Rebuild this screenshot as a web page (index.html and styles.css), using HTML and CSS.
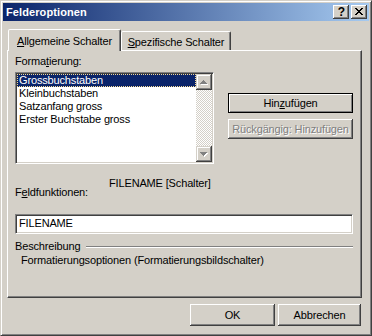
FILE: index.html
```html
<!DOCTYPE html>
<html lang="de">
<head>
<meta charset="utf-8">
<title>Felderoptionen</title>
<link rel="stylesheet" href="styles.css">
</head>
<body>
<div class="window">
  <div class="titlebar">
    <span class="title">Felderoptionen</span>
    <div class="caption-btns">
      <span class="cbtn help">?</span>
      <span class="cbtn close">
        <svg width="16" height="14" viewBox="0 0 16 14" shape-rendering="crispEdges">
          <g fill="#000">
            <rect x="4" y="3" width="2" height="1"/><rect x="10" y="3" width="2" height="1"/>
            <rect x="5" y="4" width="2" height="1"/><rect x="9" y="4" width="2" height="1"/>
            <rect x="6" y="5" width="4" height="1"/>
            <rect x="7" y="6" width="2" height="1"/>
            <rect x="6" y="7" width="4" height="1"/>
            <rect x="5" y="8" width="2" height="1"/><rect x="9" y="8" width="2" height="1"/>
            <rect x="4" y="9" width="2" height="1"/><rect x="10" y="9" width="2" height="1"/>
          </g>
        </svg>
      </span>
    </div>
  </div>

  <div class="tabs">
    <div class="tab active"><u>A</u>llgemeine Schalter</div>
    <div class="tab"><u>S</u>pezifische Schalter</div>
  </div>

  <div class="panel">
    <div class="label">Forma<u>t</u>ierung:</div>
    <div class="row-top">
      <div class="listbox">
        <div class="items">
          <div class="item selected">Grossbuchstaben</div>
          <div class="item">Kleinbuchstaben</div>
          <div class="item">Satzanfang gross</div>
          <div class="item">Erster Buchstabe gross</div>
        </div>
        <div class="scrollbar">
          <div class="sbtn">
            <svg width="16" height="16" viewBox="0 0 16 16" shape-rendering="crispEdges">
              <g fill="#fff" transform="translate(1,1)">
                <rect x="7" y="6" width="1" height="1"/><rect x="6" y="7" width="3" height="1"/>
                <rect x="5" y="8" width="5" height="1"/><rect x="4" y="9" width="7" height="1"/>
              </g>
              <g fill="#808080">
                <rect x="7" y="6" width="1" height="1"/><rect x="6" y="7" width="3" height="1"/>
                <rect x="5" y="8" width="5" height="1"/><rect x="4" y="9" width="7" height="1"/>
              </g>
            </svg>
          </div>
          <div class="track"></div>
          <div class="sbtn">
            <svg width="16" height="16" viewBox="0 0 16 16" shape-rendering="crispEdges">
              <g fill="#fff" transform="translate(1,1)">
                <rect x="4" y="6" width="7" height="1"/><rect x="5" y="7" width="5" height="1"/>
                <rect x="6" y="8" width="3" height="1"/><rect x="7" y="9" width="1" height="1"/>
              </g>
              <g fill="#808080">
                <rect x="4" y="6" width="7" height="1"/><rect x="5" y="7" width="5" height="1"/>
                <rect x="6" y="8" width="3" height="1"/><rect x="7" y="9" width="1" height="1"/>
              </g>
            </svg>
          </div>
        </div>
      </div>
      <div class="side">
        <div class="btn wide default">Hin<u>z</u>ufügen</div>
        <div class="btn wide disabled">Rückgängig: Hinzufügen</div>
      </div>
    </div>

    <div class="field-row">
      <div class="field-label">F<u>e</u>ldfunktionen:</div>
      <div class="field-syntax">FILENAME [Schalter]</div>
    </div>

    <div class="textbox">FILENAME</div>

    <div class="group-head">
      <span>Beschreibung</span>
      <div class="etch"></div>
    </div>
    <div class="desc">Formatierungsoptionen (Formatierungsbildschalter)</div>
  </div>

  <div class="footer">
    <div class="btn ok">OK</div>
    <div class="btn cancel">Abbrechen</div>
  </div>
</div>
</body>
</html>
```

FILE: styles.css
```css
* { box-sizing: border-box; }

html, body {
  margin: 0;
  padding: 0;
}

body {
  background: #d4d0c8;
  font-family: "Liberation Sans", Arial, sans-serif;
  font-size: 11px;
  line-height: 13px;
  letter-spacing: -0.15px;
  color: #000;
}

u { text-decoration: underline; text-underline-offset: 1px; }

.window {
  width: 372px;
  height: 336px;
  padding: 2px;
  background: #d4d0c8;
  border: 1px solid;
  border-color: #d4d0c8 #404040 #404040 #d4d0c8;
  box-shadow: inset 1px 1px #fff, inset -1px -1px #808080;
  display: flex;
  flex-direction: column;
}

/* Title bar */
.titlebar {
  height: 18px;
  flex: none;
  display: flex;
  align-items: center;
  padding: 0 2px 0 3px;
  background: linear-gradient(to right, #0a246a, #a6caf0);
}

.title {
  color: #fff;
  font-weight: bold;
  font-size: 11px;
  letter-spacing: 0.1px;
}

.caption-btns {
  margin-left: auto;
  display: flex;
  gap: 2px;
}

.cbtn {
  width: 16px;
  height: 14px;
  background: #d4d0c8;
  box-shadow: inset -1px -1px #404040, inset 1px 1px #fff, inset -2px -2px #808080;
  display: flex;
  align-items: center;
  justify-content: center;
}

.cbtn svg { display: block; }

.help {
  font-weight: bold;
  font-size: 12px;
  line-height: 14px;
  padding-left: 1px;
  letter-spacing: 0;
}

/* Tabs */
.tabs {
  display: flex;
  align-items: flex-end;
  height: 21px;
  margin: 8px 0 0 5px;
  flex: none;
}

.tab {
  background: #d4d0c8;
  border: 1px solid;
  border-bottom: none;
  border-color: #fff #404040 transparent #fff;
  box-shadow: inset -1px 0 #808080;
  border-radius: 2px 2px 0 0;
  text-align: center;
  white-space: nowrap;
}

.tab.active {
  width: 113px;
  height: 22px;
  margin-bottom: -1px;
  padding-top: 5px;
  position: relative;
  z-index: 1;
}

.tab:not(.active) {
  width: 110px;
  height: 19px;
  padding-top: 4px;
}

/* Panel */
.panel {
  margin-left: 4px;
  width: 355px;
  height: 248px;
  flex: none;
  border: 1px solid;
  border-color: #fff #404040 #404040 #fff;
  box-shadow: inset -1px -1px #808080;
  padding: 4px 8px 0 7px;
}

.row-top {
  display: flex;
  margin-top: 4px;
}

.listbox {
  width: 203px;
  height: 92px;
  background: #fff;
  border: 1px solid;
  border-color: #808080 #fff #fff #808080;
  box-shadow: inset 1px 1px #404040, inset -1px -1px #d4d0c8;
  padding: 1px;
  display: flex;
}

.items {
  flex: 1;
}

.item {
  height: 13px;
  padding-left: 2px;
  white-space: nowrap;
}

.item.selected {
  background: #0a246a;
  color: #fff;
  outline: 1px dotted #f5db95;
  outline-offset: -1px;
}

.scrollbar {
  width: 16px;
  display: flex;
  flex-direction: column;
}

.sbtn {
  width: 16px;
  height: 16px;
  flex: none;
  background: #d4d0c8;
  box-shadow: inset -1px -1px #404040, inset 1px 1px #d4d0c8, inset -2px -2px #808080, inset 2px 2px #fff;
}

.sbtn svg { display: block; }

.track {
  flex: 1;
  background-color: #d4d0c8;
  background-image: conic-gradient(#fff 25%, #d4d0c8 0 50%, #fff 0 75%, #d4d0c8 0);
  background-size: 2px 2px;
}

.side {
  margin-left: 14px;
  padding-top: 21px;
  display: flex;
  flex-direction: column;
  gap: 6px;
}

/* Buttons */
.btn {
  background: #d4d0c8;
  display: flex;
  align-items: center;
  justify-content: center;
  white-space: nowrap;
  box-shadow: inset -1px -1px #404040, inset 1px 1px #fff, inset -2px -2px #808080;
}

.btn.wide {
  width: 125px;
  height: 20px;
}

.btn.default {
  border: 1px solid #000;
  box-shadow: inset 1px 1px #fff, inset -1px -1px #808080;
}

.btn.disabled {
  color: #808080;
  text-shadow: 1px 1px #fff;
}

/* Field functions */
.field-row {
  display: flex;
  align-items: flex-start;
  margin-top: 13px;
}

.field-label {
  width: 94px;
  margin-top: 9px;
}

.textbox {
  margin-top: 15px;
  height: 20px;
  background: #fff;
  border: 1px solid;
  border-color: #808080 #fff #fff #808080;
  box-shadow: inset 1px 1px #404040, inset -1px -1px #d4d0c8;
  padding: 2px 0 0 3px;
}

.group-head {
  margin-top: 6px;
  display: flex;
  align-items: center;
}

.etch {
  flex: 1;
  margin-left: 6px;
  height: 2px;
  border-top: 1px solid #808080;
  border-bottom: 1px solid #fff;
}

.desc {
  margin: 1px 0 0 6px;
}

/* Footer */
.footer {
  display: flex;
  justify-content: flex-end;
  gap: 3px;
  margin-top: 6px;
  padding-right: 8px;
}

.footer .btn {
  height: 22px;
}

.btn.ok { width: 85px; }
.btn.cancel { width: 83px; }
```
